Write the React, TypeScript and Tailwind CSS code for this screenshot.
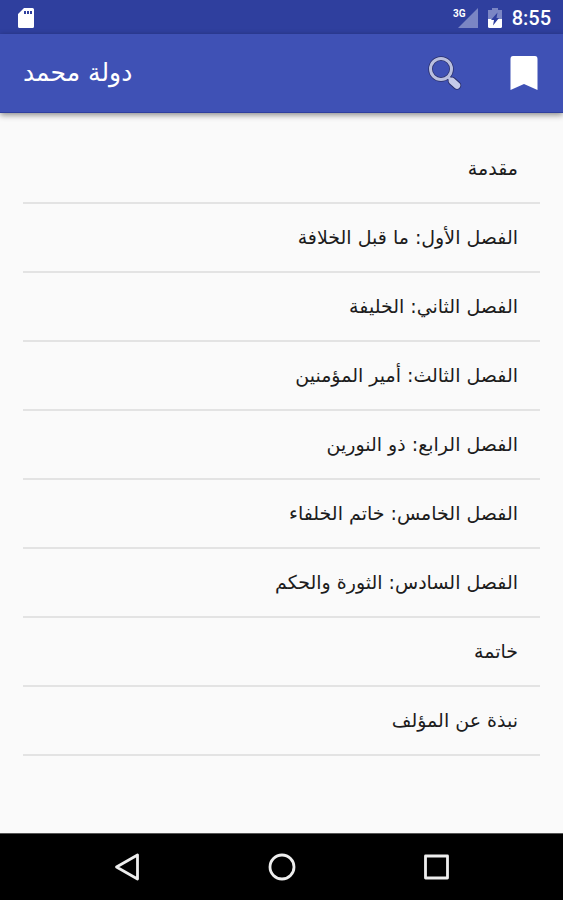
const chapters = [
  { id: "intro", title: "مقدمة" },
  { id: "ch1", title: "الفصل الأول: ما قبل الخلافة" },
  { id: "ch2", title: "الفصل الثاني: الخليفة" },
  { id: "ch3", title: "الفصل الثالث: أمير المؤمنين" },
  { id: "ch4", title: "الفصل الرابع: ذو النورين" },
  { id: "ch5", title: "الفصل الخامس: خاتم الخلفاء" },
  { id: "ch6", title: "الفصل السادس: الثورة والحكم" },
  { id: "end", title: "خاتمة" },
  { id: "author", title: "نبذة عن المؤلف" },
];

const StatusBar = () => (
  <div className="flex h-[34px] items-center justify-between bg-[#2f3f9e] pt-0.5 pr-3 pl-[18px] text-white">
    <svg width="16" height="20" viewBox="0 0 16 20" aria-label="SD card">
      <path
        fill="currentColor"
        fillRule="evenodd"
        d="M6 0h8.5Q16 0 16 1.500V18.500Q16 20 14.500 20h-13Q0 20 0 18.500V6ZM6 3v3h2V3Zm3 0v3h2V3Zm3 0v3h2V3Z"
      />
    </svg>

    <div className="flex items-center">
      <svg className="mr-[10px]" width="26" height="20" viewBox="0 0 26 20" aria-label="3G signal">
        <path fill="#7b86c4" d="M26 0v20H6Z" />
        <text
          x="1"
          y="9"
          fill="#fff"
          stroke="#2f3f9e"
          strokeWidth="2"
          paintOrder="stroke"
          className="font-['Roboto',sans-serif] text-[10px] font-bold"
        >
          3G
        </text>
      </svg>
      <svg className="mr-[10px]" width="14" height="20" viewBox="0 0 14 20" aria-label="Battery charging">
        <path fill="#7b86c4" d="M4 0h6v2h4v9H0V2h4Z" />
        <path fill="#fff" d="M0 11h14v7.500Q14 20 12.500 20h-11Q0 20 0 18.500Z" />
        <path fill="#2f3f9e" d="M9.500 4.500 8.500 10H11L5 17.500 6 12H3Z" />
      </svg>
      <span className="font-['Roboto',sans-serif] text-xl leading-6 font-medium">8:55</span>
    </div>
  </div>
);

const AppBar = () => (
  <header className="flex h-[79px] items-center justify-between border-b border-[#2f3f9e] bg-[#3f51b5] pr-[25px] pl-[23px] text-white shadow-[0_2px_6px_rgba(0,0,0,0.45)]">
    <h1 dir="rtl" className="text-[25px] leading-8">
      دولة محمد
    </h1>
    <div className="flex items-center gap-12">
      <button type="button" aria-label="بحث">
        <svg width="34" height="36" viewBox="0 0 34 36" fill="none">
          <circle cx="13" cy="14" r="10.500" stroke="#2a2f6a" strokeWidth="4.500" />
          <path d="m20 22 3 3" stroke="#2a2f6a" strokeWidth="5" />
          <path d="m24 26 5 4.500" stroke="#2a2f6a" strokeWidth="8.500" strokeLinecap="round" />
          <circle cx="13" cy="14" r="10.500" stroke="#b9bfdf" strokeWidth="3" />
          <path d="m20 22 3 3" stroke="#b9bfdf" strokeWidth="3" />
          <path d="m24 26 5 4.500" stroke="#c5cae9" strokeWidth="6.500" strokeLinecap="round" />
        </svg>
      </button>
      <button type="button" aria-label="إشارة مرجعية">
        <svg width="28" height="36" viewBox="0 0 28 36">
          <path fill="currentColor" d="M3 1h22q2.500 0 2.500 3v31L14 29 .500 35V4q0-3 2.500-3Z" />
        </svg>
      </button>
    </div>
  </header>
);

const NavBar = () => (
  <nav className="flex h-[67px] items-center justify-center gap-[126px] border-t border-[#555] bg-black text-[#eee]">
    <button type="button" aria-label="Back">
      <svg width="28" height="28" viewBox="0 0 28 28" fill="none" stroke="currentColor" strokeWidth="2.800" strokeLinejoin="round">
        <path d="M23.500 2v24L2.500 14Z" />
      </svg>
    </button>
    <button type="button" aria-label="Home">
      <svg width="28" height="28" viewBox="0 0 28 28" fill="none" stroke="currentColor" strokeWidth="2.800">
        <circle cx="14" cy="14" r="12" />
      </svg>
    </button>
    <button type="button" aria-label="Recent apps">
      <svg width="28" height="28" viewBox="0 0 28 28" fill="none" stroke="currentColor" strokeWidth="2.800" strokeLinejoin="round">
        <rect x="3.500" y="3" width="22" height="22" />
      </svg>
    </button>
  </nav>
);

export default function App() {
  return (
    <div className="flex min-h-screen flex-col bg-[#fafafa] font-['DejaVu_Sans',sans-serif]">
      <StatusBar />
      <AppBar />

      <main className="flex-1 px-[23px] pt-[22px]">
        <ul dir="rtl">
          {chapters.map((chapter) => (
            <li key={chapter.id} className="border-b-2 border-[#e3e3e3]">
              <a href={`#${chapter.id}`} className="flex h-[67px] items-center px-[22px] pb-0.5 text-[19px] leading-7 text-[#1c1c1c]">
                {chapter.title}
              </a>
            </li>
          ))}
        </ul>
      </main>

      <NavBar />
    </div>
  );
}
